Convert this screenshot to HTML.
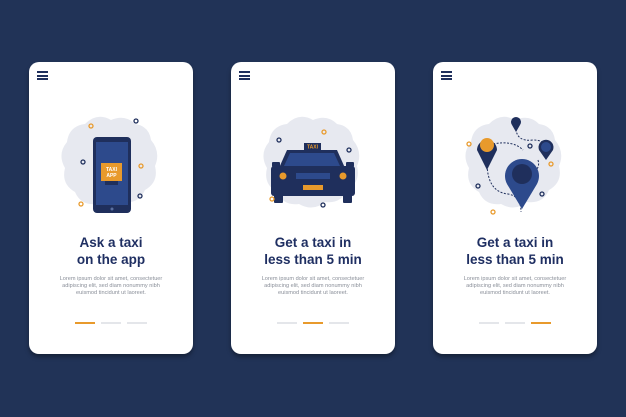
<!DOCTYPE html>
<html><head><meta charset="utf-8"><style>
body{margin:0;width:626px;height:417px;background:#213357;position:relative;overflow:hidden;font-family:"Liberation Sans",sans-serif}
.card{position:absolute;top:62px;width:164px;height:292px;background:#fff;border-radius:10px;box-shadow:0 3px 4px rgba(0,0,0,.35)}
.ham{position:absolute;left:8px;top:9px;width:11px;height:9px}
.ham i{display:block;height:2px;background:#1f2f5c;margin-bottom:1.5px}
.t{position:absolute;left:0;width:164px;top:172px;text-align:center;color:#1f2f62;font-weight:bold;font-size:13.5px;line-height:17px}
.l{position:absolute;left:0;width:164px;top:214px;text-align:center;color:#8a8f99;font-size:5.6px;line-height:7px}
.d{position:absolute;top:260px;width:20px;height:2px;background:#e4e6ea}
.d.o{background:#e89a2c}
svg{position:absolute;left:0;top:0}
</style></head><body>

<div class="card" style="left:29px">
<div class="ham"><i></i><i></i><i></i></div>
<svg width="164" height="170" viewBox="0 0 164 170">
<path d="M82 58 Q96 52 106 62 Q120 64 122 78 Q132 90 126 104 Q130 120 116 128 Q110 142 94 140 Q82 150 68 142 Q52 144 46 130 Q32 122 36 106 Q28 92 38 80 Q40 64 56 62 Q68 50 82 58Z" fill="#e7e9f0"/>
<rect x="64" y="75" width="38" height="76" rx="4" fill="#1f2f5c"/>
<rect x="67" y="80" width="32" height="63" fill="#2d4a8c"/>
<rect x="72" y="101" width="21" height="18" fill="#e89a2c"/>
<text x="82.5" y="109" font-size="5" fill="#fff" text-anchor="middle" font-weight="bold">TAXI</text>
<text x="82.5" y="115" font-size="5" fill="#fff" text-anchor="middle" font-weight="bold">APP</text>
<rect x="76" y="119" width="13" height="4" fill="#1f2f5c"/>
<circle cx="83" cy="147" r="1.5" fill="#5a6fa0"/>
<g fill="none" stroke-width="1.3"><circle cx="62" cy="64" r="2" stroke="#e89a2c"/><circle cx="112" cy="104" r="2" stroke="#e89a2c"/><circle cx="52" cy="142" r="2" stroke="#e89a2c"/><circle cx="107" cy="59" r="2" stroke="#1f2f5c"/><circle cx="54" cy="100" r="2" stroke="#1f2f5c"/><circle cx="111" cy="134" r="2" stroke="#1f2f5c"/></g>
</svg>
<div class="t">Ask a taxi<br>on the app</div>
<div class="l">Lorem ipsum dolor sit amet, consectetuer<br>adipiscing elit, sed diam nonummy nibh<br>euismod tincidunt ut laoreet.</div>
<div class="d o" style="left:46px"></div><div class="d" style="left:72px"></div><div class="d" style="left:98px"></div>
</div>

<div class="card" style="left:231px">
<div class="ham"><i></i><i></i><i></i></div>
<svg width="164" height="170" viewBox="0 0 164 170">
<path d="M82 58 Q96 52 106 62 Q120 64 122 78 Q132 90 126 104 Q130 120 116 128 Q110 142 94 140 Q82 150 68 142 Q52 144 46 130 Q32 122 36 106 Q28 92 38 80 Q40 64 56 62 Q68 50 82 58Z" fill="#e7e9f0"/>
<rect x="73" y="81" width="17" height="7" fill="#1f2f5c"/>
<text x="81.5" y="86.5" font-size="5" fill="#e89a2c" text-anchor="middle" font-weight="bold">TAXI</text>
<path d="M56 88 H106 L114 106 H48Z" fill="#1f2f5c"/>
<path d="M59 91 H103 L109 104 H53Z" fill="#2d4a8c"/>
<rect x="40" y="104" width="84" height="30" rx="3" fill="#1f2f5c"/>
<rect x="41" y="100" width="8" height="5" rx="1" fill="#1f2f5c"/><rect x="115" y="100" width="8" height="5" rx="1" fill="#1f2f5c"/>
<circle cx="52" cy="114" r="3.5" fill="#e89a2c"/><circle cx="112" cy="114" r="3.5" fill="#e89a2c"/>
<rect x="65" y="111" width="34" height="6" fill="#2d4a8c"/>
<rect x="72" y="123" width="20" height="5" fill="#e89a2c"/>
<rect x="43" y="132" width="9" height="9" rx="1" fill="#1f2f5c"/><rect x="112" y="132" width="9" height="9" rx="1" fill="#1f2f5c"/>
<g fill="none" stroke-width="1.3"><circle cx="93" cy="70" r="2" stroke="#e89a2c"/><circle cx="41" cy="137" r="2" stroke="#e89a2c"/><circle cx="48" cy="78" r="2" stroke="#1f2f5c"/><circle cx="118" cy="88" r="2" stroke="#1f2f5c"/><circle cx="92" cy="143" r="2" stroke="#1f2f5c"/></g>
</svg>
<div class="t">Get a taxi in<br>less than 5 min</div>
<div class="l">Lorem ipsum dolor sit amet, consectetuer<br>adipiscing elit, sed diam nonummy nibh<br>euismod tincidunt ut laoreet.</div>
<div class="d" style="left:46px"></div><div class="d o" style="left:72px"></div><div class="d" style="left:98px"></div>
</div>

<div class="card" style="left:433px">
<div class="ham"><i></i><i></i><i></i></div>
<svg width="164" height="170" viewBox="0 0 164 170">
<path d="M82 58 Q96 52 106 62 Q120 64 122 78 Q132 90 126 104 Q130 120 116 128 Q110 142 94 140 Q82 150 68 142 Q52 144 46 130 Q32 122 36 106 Q28 92 38 80 Q40 64 56 62 Q68 50 82 58Z" fill="#e7e9f0"/>
<g fill="none" stroke="#1f2f5c" stroke-width="1" stroke-dasharray="2 1.5"><path d="M54 100 Q54 130 75 132 Q88 134 88 150"/><path d="M60 82 Q80 78 90 88"/><path d="M83 67 Q84 80 100 78 Q112 78 113 86"/><path d="M105 98 Q108 108 96 112"/></g>
<path d="M54 108 L44 88 A10 10 0 1 1 64 88Z" fill="#1f2f5c"/><circle cx="54" cy="83" r="7" fill="#e89a2c"/>
<path d="M113 98 L106 88 A7.5 7.5 0 1 1 120 88Z" fill="#1f2f5c"/><circle cx="113" cy="85" r="5" fill="#2d4a8c"/>
<path d="M83 70 L79 63 A5 5 0 1 1 87 63Z" fill="#1f2f5c"/>
<path d="M89 147 L74 122 A17 17 0 1 1 104 122Z" fill="#2d4a8c"/><circle cx="89" cy="112" r="10" fill="#1f2f5c"/>
<g fill="none" stroke-width="1.3"><circle cx="36" cy="82" r="2" stroke="#e89a2c"/><circle cx="118" cy="102" r="2" stroke="#e89a2c"/><circle cx="60" cy="150" r="2" stroke="#e89a2c"/><circle cx="97" cy="84" r="2" stroke="#1f2f5c"/><circle cx="45" cy="124" r="2" stroke="#1f2f5c"/><circle cx="109" cy="132" r="2" stroke="#1f2f5c"/></g>
</svg>
<div class="t">Get a taxi in<br>less than 5 min</div>
<div class="l">Lorem ipsum dolor sit amet, consectetuer<br>adipiscing elit, sed diam nonummy nibh<br>euismod tincidunt ut laoreet.</div>
<div class="d" style="left:46px"></div><div class="d" style="left:72px"></div><div class="d o" style="left:98px"></div>
</div>

</body></html>
